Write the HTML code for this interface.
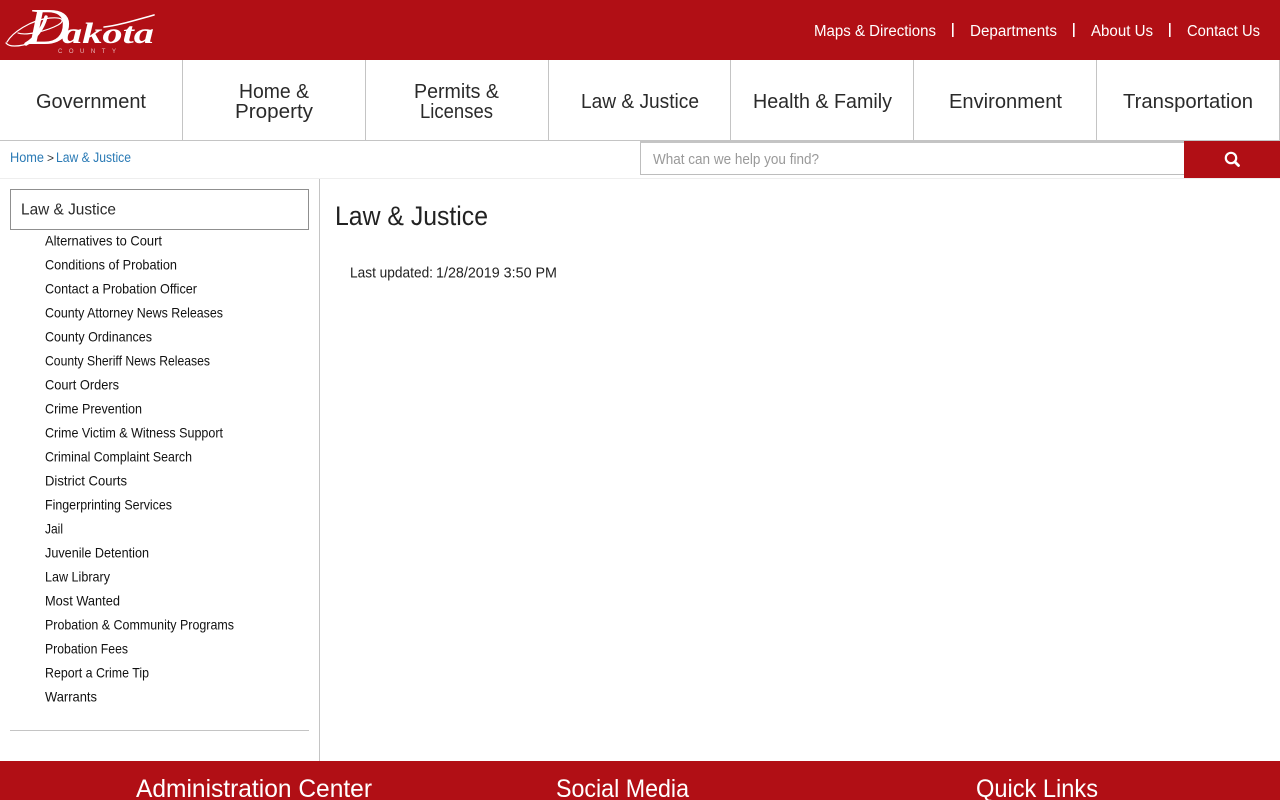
<!DOCTYPE html>
<html lang="en"><head><meta charset="utf-8"><title>Law &amp; Justice</title>
<style>
html,body{margin:0;padding:0;width:1280px;height:800px;overflow:hidden;background:#fff}
svg{display:block;position:absolute;left:0;top:0}
text{font-family:"Liberation Sans",sans-serif}
.n{font-size:20.5px;fill:#2a2a2a}
.t{font-size:15.5px;fill:#fff}
.s{font-size:14px;fill:#111}
.b{font-size:13.5px;fill:#2a7ab5}
.f{font-size:25px;fill:#fff}
.logo{font-family:"Liberation Serif",serif;font-style:italic;fill:#fff}
</style></head><body>
<svg width="1280" height="800" viewBox="0 0 1280 800" xmlns="http://www.w3.org/2000/svg">
<rect width="1280" height="60" fill="#b10f15"/>
<text class="logo" x="26" y="44" style="font-size:52px" textLength="44" lengthAdjust="spacingAndGlyphs">D</text>
<text class="logo" x="62" y="43" style="font-size:30px;font-weight:bold" textLength="92" lengthAdjust="spacingAndGlyphs">akota</text>
<g fill="none" stroke="#fff" stroke-linecap="round">
<path d="M7 42C12 33 30 20 50 18C62 17 66 20 58 25C47 31 26 36 18 33" stroke-width="1.2"/>
<path d="M6 43C10 48 22 46 34 42" stroke-width="1.3"/>
<path d="M46 17C43 28 36 38 26 44" stroke-width="3.4"/>
<path d="M104 27C116 26 136 20 154 15" stroke-width="1.6"/>
</g>
<text x="58" y="53" style="font-size:6px" fill="#e9bcbc" textLength="58">COUNTY</text>

<text class="t" x="814" y="36" textLength="122" lengthAdjust="spacingAndGlyphs">Maps &amp; Directions</text>
<rect x="952" y="23" width="1.6" height="14" fill="#fff"/>
<text class="t" x="970" y="36" textLength="87" lengthAdjust="spacingAndGlyphs">Departments</text>
<rect x="1073" y="23" width="1.6" height="14" fill="#fff"/>
<text class="t" x="1091" y="36" textLength="62" lengthAdjust="spacingAndGlyphs">About Us</text>
<rect x="1169" y="23" width="1.6" height="14" fill="#fff"/>
<text class="t" x="1187" y="36" textLength="73" lengthAdjust="spacingAndGlyphs">Contact Us</text>

<g fill="#c4c4c4">
<rect x="182" y="60" width="1" height="80"/><rect x="365" y="60" width="1" height="80"/><rect x="548" y="60" width="1" height="80"/><rect x="730" y="60" width="1" height="80"/><rect x="913" y="60" width="1" height="80"/><rect x="1096" y="60" width="1" height="80"/><rect x="1279" y="60" width="1" height="80"/>
<rect x="0" y="140" width="1280" height="1"/>
</g>
<text class="n" x="36" y="108" textLength="110" lengthAdjust="spacingAndGlyphs">Government</text>
<text class="n" x="239" y="98" textLength="70" lengthAdjust="spacingAndGlyphs">Home &amp;</text>
<text class="n" x="235" y="118" textLength="78" lengthAdjust="spacingAndGlyphs">Property</text>
<text class="n" x="414" y="98" textLength="85" lengthAdjust="spacingAndGlyphs">Permits &amp;</text>
<text class="n" x="420" y="118" textLength="73" lengthAdjust="spacingAndGlyphs">Licenses</text>
<text class="n" x="581" y="108" textLength="118" lengthAdjust="spacingAndGlyphs">Law &amp; Justice</text>
<text class="n" x="753" y="108" textLength="139" lengthAdjust="spacingAndGlyphs">Health &amp; Family</text>
<text class="n" x="949" y="108" textLength="113" lengthAdjust="spacingAndGlyphs">Environment</text>
<text class="n" x="1123" y="108" textLength="130" lengthAdjust="spacingAndGlyphs">Transportation</text>

<text class="b" x="10" y="162" textLength="34" lengthAdjust="spacingAndGlyphs">Home</text>
<text x="47" y="162" style="font-size:12px" fill="#333">&gt;</text>
<text class="b" x="56" y="162" textLength="75" lengthAdjust="spacingAndGlyphs">Law &amp; Justice</text>

<rect x="640.5" y="141.5" width="560" height="33" fill="#fff" stroke="#bdbdbd"/>
<rect x="640" y="141" width="560" height="2" fill="#c4c4c4"/>
<text x="653" y="164" style="font-size:14.5px" fill="#999" textLength="166" lengthAdjust="spacingAndGlyphs">What can we help you find?</text>
<rect x="1184" y="141" width="96" height="37" fill="#b10f15"/>
<circle cx="1231" cy="158" r="5.2" fill="none" stroke="#fff" stroke-width="2.2"/>
<path d="M1235 162L1238.5 165.5" stroke="#fff" stroke-width="2.8" stroke-linecap="round"/>

<rect x="0" y="178" width="1280" height="1" fill="#eeeeee"/>
<rect x="319" y="179" width="1" height="582" fill="#c4c4c4"/>

<rect x="10.5" y="189.5" width="298" height="40" fill="#fff" stroke="#8f8f8f"/>
<text x="21" y="214.5" style="font-size:16px" fill="#2a2a2a" textLength="95" lengthAdjust="spacingAndGlyphs">Law &amp; Justice</text>

<text class="s" x="45" y="245.5" textLength="117" lengthAdjust="spacingAndGlyphs">Alternatives to Court</text>
<text class="s" x="45" y="269.5" textLength="132" lengthAdjust="spacingAndGlyphs">Conditions of Probation</text>
<text class="s" x="45" y="293.5" textLength="152" lengthAdjust="spacingAndGlyphs">Contact a Probation Officer</text>
<text class="s" x="45" y="317.5" textLength="178" lengthAdjust="spacingAndGlyphs">County Attorney News Releases</text>
<text class="s" x="45" y="341.5" textLength="107" lengthAdjust="spacingAndGlyphs">County Ordinances</text>
<text class="s" x="45" y="365.5" textLength="165" lengthAdjust="spacingAndGlyphs">County Sheriff News Releases</text>
<text class="s" x="45" y="389.5" textLength="74" lengthAdjust="spacingAndGlyphs">Court Orders</text>
<text class="s" x="45" y="413.5" textLength="97" lengthAdjust="spacingAndGlyphs">Crime Prevention</text>
<text class="s" x="45" y="437.5" textLength="178" lengthAdjust="spacingAndGlyphs">Crime Victim &amp; Witness Support</text>
<text class="s" x="45" y="461.5" textLength="147" lengthAdjust="spacingAndGlyphs">Criminal Complaint Search</text>
<text class="s" x="45" y="485.5" textLength="82" lengthAdjust="spacingAndGlyphs">District Courts</text>
<text class="s" x="45" y="509.5" textLength="127" lengthAdjust="spacingAndGlyphs">Fingerprinting Services</text>
<text class="s" x="45" y="533.5" textLength="18" lengthAdjust="spacingAndGlyphs">Jail</text>
<text class="s" x="45" y="557.5" textLength="104" lengthAdjust="spacingAndGlyphs">Juvenile Detention</text>
<text class="s" x="45" y="581.5" textLength="65" lengthAdjust="spacingAndGlyphs">Law Library</text>
<text class="s" x="45" y="605.5" textLength="75" lengthAdjust="spacingAndGlyphs">Most Wanted</text>
<text class="s" x="45" y="629.5" textLength="189" lengthAdjust="spacingAndGlyphs">Probation &amp; Community Programs</text>
<text class="s" x="45" y="653.5" textLength="83" lengthAdjust="spacingAndGlyphs">Probation Fees</text>
<text class="s" x="45" y="677.5" textLength="104" lengthAdjust="spacingAndGlyphs">Report a Crime Tip</text>
<text class="s" x="45" y="701.5" textLength="52" lengthAdjust="spacingAndGlyphs">Warrants</text>
<rect x="10" y="730" width="299" height="1" fill="#c4c4c4"/>

<text x="335" y="225" style="font-size:27px" fill="#222" textLength="153" lengthAdjust="spacingAndGlyphs">Law &amp; Justice</text>
<text x="350" y="277.5" style="font-size:14.5px" fill="#222" textLength="83" lengthAdjust="spacingAndGlyphs">Last updated:</text>
<text x="436" y="277.5" style="font-size:14.5px" fill="#222" textLength="121" lengthAdjust="spacingAndGlyphs">1/28/2019 3:50 PM</text>

<rect x="0" y="761" width="1280" height="39" fill="#b10f15"/>
<text class="f" x="136" y="797" textLength="236" lengthAdjust="spacingAndGlyphs">Administration Center</text>
<text class="f" x="556" y="797" textLength="133" lengthAdjust="spacingAndGlyphs">Social Media</text>
<text class="f" x="976" y="797" textLength="122" lengthAdjust="spacingAndGlyphs">Quick Links</text>
</svg>
</body></html>
